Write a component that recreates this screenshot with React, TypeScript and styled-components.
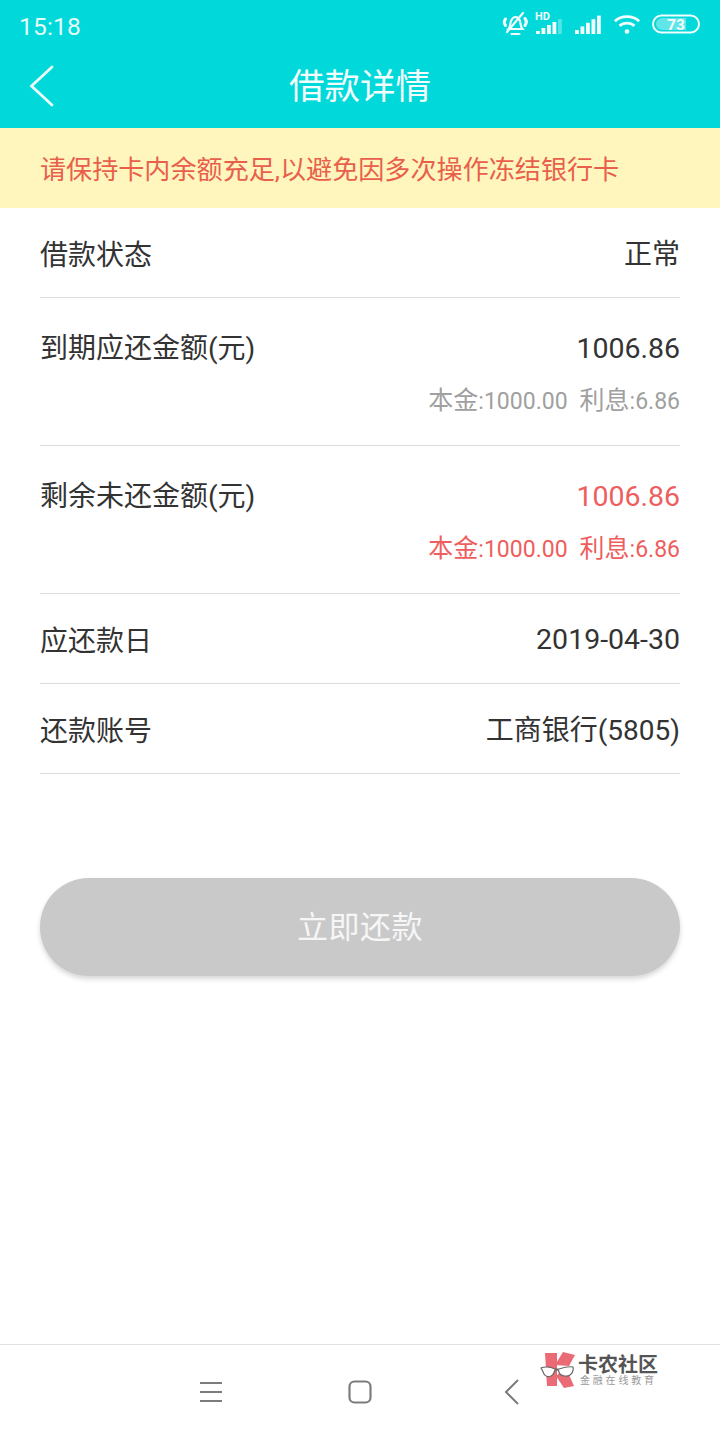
import React from "react";
import styled, { createGlobalStyle } from "styled-components";

const Global = createGlobalStyle`
  html, body { margin: 0; padding: 0; background: #fff; }
  body { font-family: Roboto, "Noto Sans CJK SC", sans-serif; }
  * { box-sizing: border-box; }
`;
const Page = styled.div`
  position: relative; width: 720px; height: 1440px; background: #fff;
  display: flex; flex-direction: column; overflow: hidden;
`;
const Head = styled.header`
  height: 128px; background: #00d8da; color: #fff; display: flex; flex-direction: column;
`;
const StatusBar = styled.div`
  height: 48px; padding: 3px 20px 0 19px; display: flex; align-items: center; justify-content: space-between;
`;
const Clock = styled.span`
  font-size: 24.500px; letter-spacing: 0.2px; color: #e4fbfb; padding-top: 2px;
`;
const StatusIcons = styled.div`
  display: flex; align-items: center; margin-top: -3px;
`;
const SignalSvg = styled.svg`
  margin-top: -2px;
`;
const NavBar = styled.div`
  position: relative; flex: 1; display: flex; align-items: center; justify-content: center; padding-bottom: 9px;
`;
const BackBtn = styled.svg`
  position: absolute; left: 28px; top: 16px;
`;
const Title = styled.h1`
  margin: 0; font-size: 35.500px; font-weight: 400; color: #f2fdfd; font-family: "Noto Sans CJK SC", sans-serif;
`;
const Banner = styled.div`
  height: 80px; background: #fff6bd; color: #e8604c; padding: 0 40px; display: flex; align-items: center;
  font-size: 26.100px; font-family: Roboto, "Noto Sans CJK SC", sans-serif; white-space: nowrap;
`;
const List = styled.div`
  padding: 0 40px; display: flex; flex-direction: column;
`;
const Row = styled.div<{ $tall?: boolean }>`
  height: ${p => (p.$tall ? 148 : 90)}px; border-bottom: 1px solid #dcdcdc; display: flex; flex-direction: column;
  padding-top: ${p => (p.$tall ? 31 : 0)}px;
  justify-content: ${p => (p.$tall ? "flex-start" : "center")};
`;
const Line = styled.div`
  display: flex; justify-content: space-between; align-items: center; height: 36px; white-space: nowrap;
`;
const Label = styled.span<{ $tall?: boolean }>`
  font-size: 28px; color: #333; font-family: Roboto, "Noto Sans CJK SC", sans-serif; position: relative;
  top: ${p => (p.$tall ? -1 : 0)}px;
`;
const Value = styled.span<{ $red?: boolean; $cjk?: boolean }>`
  font-size: ${p => (p.$cjk ? 28 : 28.5)}px; color: ${p => (p.$red ? "#ee5e5e" : "#333")};
  font-family: Roboto, "Noto Sans CJK SC", sans-serif;
  position: relative; top: ${p => (p.$cjk ? -1 : 1)}px;
`;
const Sub = styled.div<{ $red?: boolean }>`
  display: flex; justify-content: flex-end; gap: 12px; margin-top: 16px; font-size: 25px; height: 34px; align-items: center;
  color: ${p => (p.$red ? "#ee5e5e" : "#a0a0a0")}; font-family: Roboto, "Noto Sans CJK SC", sans-serif;
`;
const Num = styled.span`
  font-size: 23px;
`;
const PayBtn = styled.button`
  display: block; margin: 104px 40px 0; width: 640px; height: 98px; border: 0; border-radius: 49px;
  background: #c9c9c9; color: #f6f6f6; font-size: 31px; font-family: "Noto Sans CJK SC", sans-serif;
  box-shadow: 0 3px 5px rgba(0,0,0,0.16); letter-spacing: 0.5px; padding: 0 0 6px;
`;
const BottomNav = styled.nav`
  position: absolute; left: 0; right: 0; top: 1344px; height: 96px; border-top: 1px solid #e2e2e2; background: #fff;
`;
const SoftKeys = styled.div`
  position: absolute; top: 34px; left: 199px; display: flex; align-items: center;
`;
const HomeKey = styled.svg`
  margin-left: 125px;
`;
const BackKey = styled.svg`
  margin-left: 131px;
`;
const Watermark = styled.div`
  position: absolute; left: 540px; top: 1352px; display: flex; align-items: flex-start; gap: 2px;
`;
const MarkText = styled.div`
  display: flex; flex-direction: column; font-family: "Noto Sans CJK SC", sans-serif; align-items: flex-start; padding-top: 2px;
`;
const MarkTitle = styled.span`
  font-size: 20px; line-height: 20px; font-weight: 700; color: #555;
`;
const MarkSub = styled.span`
  font-size: 10px; line-height: 12px; color: #999; letter-spacing: 2.800px; margin-left: 2px;
`;
const Gap = styled.span<{ $w: number }>`
  width: ${p => p.$w}px;
`;

const Bell = () => (
  <svg width="26" height="26" viewBox="0 0 26 26" fill="none" stroke="#f2fdfd" strokeWidth="2.200" strokeLinecap="round">
    <path d="M6.500 18c2-2 1.500-5 2.500-8C10 7.500 11.500 6 13.500 6c2 0 3.500 1.500 4.300 3.500 1 3 .4 6 2.700 8.500z" />
    <path d="M9.500 23h8" />
    <path d="M3.500 8C2 10 2 12.500 3.500 14.500M23 7.500c1.500 2 1.500 5 0 7" strokeWidth="3" />
    <path d="M5 21 21 2" />
  </svg>
);
const Signal = ({ hd }: { hd?: boolean }) => (
  <SignalSvg width="28" height="24" viewBox="0 -2 28 24" fill="#f2fdfd">
    {hd && <text x="0" y="7" fontSize="11" fontWeight="700" fontFamily="Roboto, sans-serif">HD</text>}
    {[0, 1, 2, 3, 4].map(i => {
      const h = hd ? 3 + i * 3 : 4 + i * 3.6;
      return <rect key={i} x={1 + i * 5.500} y={21 - h} width="3.800" height={h} opacity={hd && i === 4 ? 0.35 : 1} />;
    })}
  </SignalSvg>
);
const Wifi = () => (
  <svg width="28" height="22" viewBox="0 0 30 22" fill="none" stroke="#f2fdfd" strokeWidth="3">
    <path d="M2 8c7-6.500 19-6.500 26 0" />
    <path d="M7 13c4.500-4 11.500-4 16 0" />
    <circle cx="15" cy="19" r="2.500" fill="#f2fdfd" stroke="none" />
  </svg>
);
const Battery = () => (
  <svg width="48" height="20" viewBox="0 0 48 20">
    <rect x="1" y="1.500" width="46" height="17" rx="8.500" fill="none" stroke="#f2fdfd" strokeWidth="2" />
    <path d="M4 10a6 6 0 0 1 6-6h24v12H10a6 6 0 0 1-6-6z" fill="#f2fdfd" opacity="0.4" />
    <text x="24" y="15.500" textAnchor="middle" fontSize="15.500" fontWeight="700" fill="#f2fdfd" fontFamily="Roboto, sans-serif">73</text>
  </svg>
);

const Logo = () => (
  <svg width="36" height="38" viewBox="0 0 36 38">
    <g fill="#ea6a75">
      <path d="M5 1h12v33H7z" />
      <path d="M15 13 23 0l12 3-6 11z" />
      <path d="M16 24l10-8 8 18-10 2z" />
    </g>
    <path d="M1 16c2-1 4-1 6-1 3 0 6 1 8 2h4c3-1 8-3 14-2 1 3-1 7-3 8-3 2-8 1-10-1-1-1-1-3-2-4h-3c-1 2-1 5-4 6-3 1-6 0-7-2-1-2-1-3-3-6z" fill="#fff" stroke="#666" strokeWidth="1.200" />
  </svg>
);

const rows = [
  { label: "借款状态", value: "正常", cjk: true },
  { label: "到期应还金额(元)", value: "1006.86", tall: true },
  { label: "剩余未还金额(元)", value: "1006.86", tall: true, red: true },
  { label: "应还款日", value: "2019-04-30" },
  { label: "还款账号", value: "工商银行(5805)", cjk: true },
];

export default function App() {
  return (
    <Page>
      <Global />
      <Head>
        <StatusBar>
          <Clock>15:18</Clock>
          <StatusIcons>
            <Bell />
            <Gap $w={7} />
            <Signal hd />
            <Gap $w={11} />
            <Signal />
            <Gap $w={11} />
            <Wifi />
            <Gap $w={11} />
            <Battery />
          </StatusIcons>
        </StatusBar>
        <NavBar>
          <BackBtn width="28" height="44" viewBox="0 0 28 44" fill="none" stroke="#eafcfc" strokeWidth="2.800" strokeLinecap="round">
            <path d="M24 3 3.500 22 24 41" />
          </BackBtn>
          <Title>借款详情</Title>
        </NavBar>
      </Head>
      <Banner>请保持卡内余额充足,以避免因多次操作冻结银行卡</Banner>
      <List>
        {rows.map(r => (
          <Row key={r.label} $tall={r.tall}>
            <Line>
              <Label $tall={r.tall}>{r.label}</Label>
              <Value $red={r.red} $cjk={r.cjk}>{r.value}</Value>
            </Line>
            {r.tall && (
              <Sub $red={r.red}>
                <span>本金<Num>:1000.00</Num></span>
                <span>利息<Num>:6.86</Num></span>
              </Sub>
            )}
          </Row>
        ))}
      </List>
      <PayBtn>立即还款</PayBtn>
      <BottomNav>
        <SoftKeys>
          <svg width="24" height="22" viewBox="0 0 24 22" stroke="#7c7c7c" strokeWidth="2">
            <path d="M1 2h22M1 11h22M1 20h22" />
          </svg>
          <HomeKey width="24" height="24" viewBox="0 0 24 24" fill="none" stroke="#7c7c7c" strokeWidth="2.200">
            <rect x="1.500" y="1.500" width="21" height="21" rx="5" />
          </HomeKey>
          <BackKey width="18" height="26" viewBox="0 0 18 26" fill="none" stroke="#7c7c7c" strokeWidth="2">
            <path d="M15 1 3 13l12 12" />
          </BackKey>
        </SoftKeys>
      </BottomNav>
      <Watermark>
        <Logo />
        <MarkText>
          <MarkTitle>卡农社区</MarkTitle>
          <MarkSub>金融在线教育</MarkSub>
        </MarkText>
      </Watermark>
    </Page>
  );
}
